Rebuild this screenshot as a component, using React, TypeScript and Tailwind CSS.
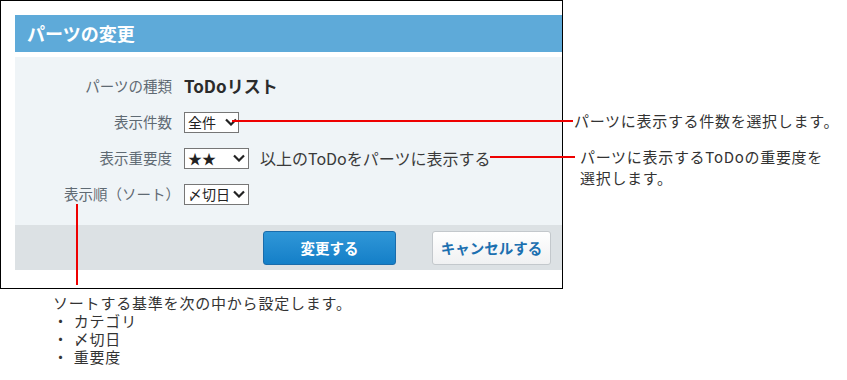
const jp = { fontFamily: '"Noto Sans CJK JP", "Noto Sans", sans-serif' };

const Chevron = () => (
  <svg width="12" height="8" viewBox="0 0 12 8" className="shrink-0">
    <path d="M1 1.5l5 5 5-5" fill="none" stroke="#222" strokeWidth="2.2" />
  </svg>
);

const FakeSelect = ({ label, width, gap }: { label: string; width: string; gap: string }) => (
  <div className={`flex items-center shrink-0 whitespace-nowrap h-[21px] border border-[#767676] bg-white pl-[3px] pr-[3px] text-[14px] text-[#222] ${width}`}>
    <span className={gap}>{label}</span>
    <Chevron />
  </div>
);

const rows = [
  { label: "パーツの種類" },
  { label: "表示件数" },
  { label: "表示重要度" },
  { label: "表示順（ソート）" },
];

export default function App() {
  return (
    <div className="relative w-[847px] h-[380px] bg-white overflow-hidden" style={jp}>
      <div className="flex">
        {/* dialog frame */}
        <div className="w-[563px] h-[289px] shrink-0 border border-black pt-[14px] pl-[14px]">
          <div className="h-[37px] bg-[#5eaad9] flex items-center pl-[12px] text-[18px] font-bold text-white">
            パーツの変更
          </div>
          <div className="mt-[5px] h-[168px] bg-[#eff4f7] pt-[11px]">
            <div className="grid grid-cols-[157px_1fr] gap-x-[12px] text-[14.5px]">
              <div className="h-[36px] flex items-center justify-end text-[#5f6a73]">{rows[0].label}</div>
              <div className="h-[36px] flex items-center text-[17px] font-bold text-[#2b2b2b]">ToDoリスト</div>

              <div className="h-[36px] flex items-center justify-end text-[#5f6a73]">{rows[1].label}</div>
              <div className="h-[36px] flex items-center">
                <FakeSelect label="全件" width="w-[55px]" gap="mr-[9px]" />
              </div>

              <div className="h-[36px] flex items-center justify-end text-[#5f6a73]">{rows[2].label}</div>
              <div className="h-[36px] flex items-center">
                <FakeSelect label="★★" width="w-[65px]" gap="mr-auto" />
                <span className="ml-[11px] text-[16px] text-[#3a3a3a] whitespace-nowrap">以上のToDoをパーツに表示する</span>
              </div>

              <div className="h-[36px] flex items-center justify-end text-[#5f6a73] -mr-[8px] whitespace-nowrap">{rows[3].label}</div>
              <div className="h-[36px] flex items-center">
                <FakeSelect label="〆切日" width="w-[65px]" gap="mr-auto" />
              </div>
            </div>
          </div>
          <div className="h-[45px] bg-[#dce1e4] flex items-center gap-[36px] pl-[248px] pt-[1px]">
            <button className="w-[133px] h-[34px] rounded-[3px] border border-[#1a6cab] bg-gradient-to-b from-[#2f97d8] to-[#137fc8] text-[14.5px] font-bold text-white">
              変更する
            </button>
            <button className="w-[119px] h-[34px] rounded-[3px] border border-[#c3c8cc] bg-gradient-to-b from-white to-[#f0f1f2] text-[14.5px] font-bold text-[#1c70b0]">
              キャンセルする
            </button>
          </div>
        </div>

        {/* right callouts */}
        <div className="flex flex-col text-[15px] tracking-[0.7px] leading-[21px] text-[#333] whitespace-nowrap">
          <div className="mt-[110px] pl-[11px]">パーツに表示する件数を選択します。</div>
          <div className="mt-[15px] pl-[17px]">
            パーツに表示するToDoの重要度を
            <br />
            選択します。
          </div>
        </div>
      </div>

      {/* bottom callout */}
      <div className="mt-[6px] pl-[53px] text-[15px] tracking-[0.8px] leading-[18px] text-[#333] font-['Liberation_Sans','Noto_Sans_CJK_JP',sans-serif]">
        <div>ソートする基準を次の中から設定します。</div>
        <div>・ カテゴリ</div>
        <div>・ 〆切日</div>
        <div>・ 重要度</div>
      </div>

      {/* red leader lines */}
      <div className="absolute left-[232px] top-[120px] w-[341px] h-[2px] bg-[#ee0000]" />
      <div className="absolute left-[490px] top-[156px] w-[85px] h-[2px] bg-[#ee0000]" />
      <div className="absolute left-[76px] top-[204px] w-[2px] h-[81px] bg-[#ee0000]" />
    </div>
  );
}
